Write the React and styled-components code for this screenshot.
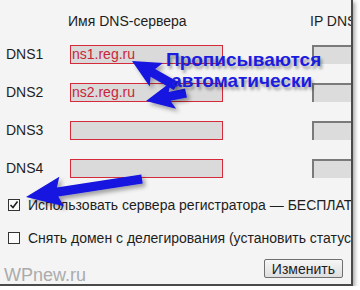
import React from "react";
import styled, { createGlobalStyle } from "styled-components";

const GlobalStyle = createGlobalStyle`
  body {
    margin: 0;
    background: #ffffff;
    font-family: Arial, "Liberation Sans", sans-serif;
  }
`;

const Frame = styled.div`
  position: relative;
  width: 353px;
  height: 286px;
  background: #f4f4f4;
  border-right: 2px solid #4a4a4a;
  border-bottom: 2px solid #4a4a4a;
  box-shadow: 2px 2px 4px rgba(0, 0, 0, 0.35);
  overflow: hidden;
  display: flex;
  flex-direction: column;
  padding-left: 6px;
  box-sizing: border-box;
  color: #1e1e1e;
  font-size: 14px;
`;

const Grid = styled.div`
  display: grid;
  grid-template-columns: 64px 242px 60px;
`;

const HeaderRow = styled(Grid)`
  margin-top: 13px;
  height: 16px;
  line-height: 16px;
`;

const HeaderCell = styled.div`
  grid-column: ${(p) => p.$col};
  margin-left: -2px;
  white-space: nowrap;
`;

const DnsList = styled.div`
  display: flex;
  flex-direction: column;
  gap: 19px;
  margin-top: 16px;
`;

const DnsRow = styled(Grid)`
  height: 19px;
  align-items: center;
`;

const DnsLabel = styled.div`
  line-height: 19px;
`;

const NameInput = styled.div`
  width: 153px;
  height: 19px;
  box-sizing: border-box;
  border: 1px solid #d42a3a;
  background: #dadada;
  color: #c8243a;
  font-size: 14px;
  line-height: 17px;
  padding-left: 1px;
`;

const IpInput = styled.div`
  width: 60px;
  height: 19px;
  box-sizing: border-box;
  border-top: 2px solid #7a7a7a;
  border-left: 2px solid #7a7a7a;
  background: #dcdcdc;
`;

const Options = styled.div`
  display: flex;
  flex-direction: column;
  gap: 17px;
  margin-top: 19px;
`;

const OptionRow = styled.label`
  display: flex;
  align-items: center;
  gap: 8px;
  height: 16px;
  margin-left: 2px;
  white-space: nowrap;
`;

const Box = styled.span`
  flex: none;
  width: 12px;
  height: 12px;
  box-sizing: border-box;
  border: 1px solid #333;
  background: #fbfbfb;
  display: flex;
  align-items: center;
  justify-content: center;
`;

const Footer = styled.div`
  display: flex;
  justify-content: space-between;
  align-items: flex-end;
  margin-top: 13px;
  margin-left: -2px;
  padding-right: 8px;
`;

const Watermark = styled.div`
  font-size: 18px;
  color: #ababab;
  line-height: 20px;
  margin-bottom: -7px;
`;

const Button = styled.button`
  font-family: Arial, "Liberation Sans", sans-serif;
  font-size: 14px;
  color: #1e1e1e;
  height: 19px;
  padding: 0 7px;
  border: 1px solid #707070;
  border-radius: 2px;
  background: linear-gradient(#f6f6f6, #dedede);
  line-height: 16px;
`;

const Overlay = styled.svg`
  position: absolute;
  left: 0;
  top: 0;
  width: 353px;
  height: 286px;
  pointer-events: none;
`;

const Caption = styled.div`
  position: absolute;
  left: 166px;
  top: 49px;
  font-size: 19px;
  font-weight: bold;
  line-height: 21px;
  color: #1c1ce0;
  text-shadow: 2px 3px 3px rgba(0, 0, 0, 0.35);
  white-space: nowrap;
`;

const Check = () => (
  <svg width="10" height="10" viewBox="0 0 10 10">
    <path d="M1.5 5 L4 7.5 L8.5 1.5" fill="none" stroke="#222" strokeWidth="1.6" />
  </svg>
);

// arrow polygon from tail to tip
const arrow = (tx, ty, hx, hy, w, hl, hw) => {
  const dx = hx - tx;
  const dy = hy - ty;
  const len = Math.hypot(dx, dy);
  const ux = dx / len;
  const uy = dy / len;
  const nx = -uy;
  const ny = ux;
  const bx = hx - ux * hl;
  const by = hy - uy * hl;
  const pts = [
    [tx + nx * w / 2, ty + ny * w / 2],
    [bx + nx * w / 2, by + ny * w / 2],
    [bx + nx * hw / 2 - ux * 4, by + ny * hw / 2 - uy * 4],
    [hx, hy],
    [bx - nx * hw / 2 - ux * 4, by - ny * hw / 2 - uy * 4],
    [bx - nx * w / 2, by - ny * w / 2],
    [tx - nx * w / 2, ty - ny * w / 2],
  ];
  return pts.map((p) => p.map((v) => v.toFixed(1)).join(",")).join(" ");
};

const rows = [
  { label: "DNS1", value: "ns1.reg.ru" },
  { label: "DNS2", value: "ns2.reg.ru" },
  { label: "DNS3", value: "" },
  { label: "DNS4", value: "" },
];

export default function App() {
  return (
    <>
      <GlobalStyle />
      <Frame>
        <HeaderRow>
          <HeaderCell $col={2}>Имя DNS-сервера</HeaderCell>
          <HeaderCell $col={3}>IP DNS-сервера</HeaderCell>
        </HeaderRow>
        <DnsList>
          {rows.map((r) => (
            <DnsRow key={r.label}>
              <DnsLabel>{r.label}</DnsLabel>
              <NameInput>{r.value}</NameInput>
              <IpInput />
            </DnsRow>
          ))}
        </DnsList>
        <Options>
          <OptionRow>
            <Box>
              <Check />
            </Box>
            Использовать сервера регистратора — БЕСПЛАТНО
          </OptionRow>
          <OptionRow>
            <Box />
            Снять домен с делегирования (установить статус NOT DELEGATED)
          </OptionRow>
        </Options>
        <Footer>
          <Watermark>WPnew.ru</Watermark>
          <Button>Изменить</Button>
        </Footer>
        <Overlay viewBox="0 0 353 286">
          <defs>
            <filter id="sh" x="-20%" y="-20%" width="140%" height="140%">
              <feDropShadow dx="3" dy="3" stdDeviation="2" floodColor="#000" floodOpacity="0.35" />
            </filter>
          </defs>
          <g fill="#1414e0" filter="url(#sh)">
            <polygon points={arrow(176, 86, 132, 61, 9, 24, 27)} />
            <polygon points={arrow(186, 93, 146, 101, 9, 24, 27)} />
            <polygon points={arrow(142, 179, 26, 197, 9, 32, 30)} />
          </g>
        </Overlay>
        <Caption>
          Прописываются
          <br />
          &nbsp;автоматически
        </Caption>
      </Frame>
    </>
  );
}
